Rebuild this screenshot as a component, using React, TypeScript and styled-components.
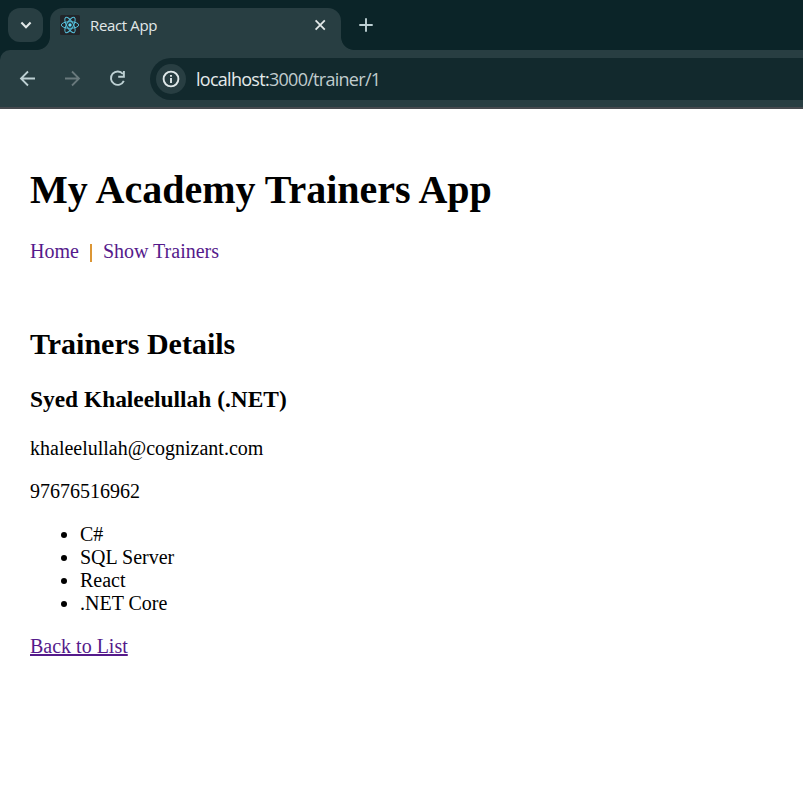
import React from "react";
import styled, { createGlobalStyle } from "styled-components";

const GlobalStyle = createGlobalStyle`
  * { box-sizing: border-box; }
  html, body { margin: 0; padding: 0; background: #fff; overflow: hidden; }
`;

const Browser = styled.div`
  width: 100%;
  height: 791px;
  overflow: hidden;
  background: #0b2428;
`;

const TabStrip = styled.div`
  height: 50px;
  display: flex;
  align-items: flex-start;
  padding: 8px 0 0 8px;
  background: #0b2428;
`;

const TabSearch = styled.div`
  width: 35px;
  height: 34px;
  border-radius: 12px;
  background: #283e42;
  display: flex;
  align-items: center;
  justify-content: center;
`;

const Tab = styled.div`
  position: relative;
  width: 290.5px;
  height: 42px;
  margin-left: 7px;
  padding: 0 13.5px 8px 10px;
  border-radius: 13px 13px 0 0;
  background: #283e42;
  display: flex;
  align-items: center;
`;

const TabFoot = styled.span<{ $side: "left" | "right" }>`
  position: absolute;
  bottom: 0;
  ${(p) => p.$side}: -13px;
  width: 13px;
  height: 13px;
  background: radial-gradient(
    circle at ${(p) => (p.$side === "left" ? "0 0" : "100% 0")},
    transparent 12.5px,
    #283e42 13.3px
  );
`;

const TabTitle = styled.span`
  flex: 1;
  margin-left: 10px;
  font: 15px/20px "Open Sans", "Noto Sans", sans-serif;
  letter-spacing: -0.35px;
  color: #e2e8e8;
  white-space: nowrap;
`;

const NewTab = styled.div`
  width: 34px;
  height: 34px;
  margin-left: 8.5px;
  display: flex;
  align-items: center;
  justify-content: center;
`;

const Toolbar = styled.div`
  height: 59px;
  display: flex;
  align-items: flex-start;
  background: #283e42;
  border-bottom: 2px solid #46494e;
  border-top-left-radius: 10px;
  padding-top: 8px;
`;

const NavButtons = styled.div`
  width: 150px;
  height: 42px;
  padding-left: 18px;
  display: flex;
  align-items: center;
  gap: 25px;
  flex: none;
`;

const AddressBar = styled.div`
  flex: 1;
  height: 42px;
  padding-left: 6px;
  border-radius: 21px 0 0 21px;
  background: #12292d;
  display: flex;
  align-items: center;
`;

const SiteInfo = styled.div`
  width: 30px;
  height: 30px;
  border-radius: 50%;
  background: #283e42;
  display: flex;
  align-items: center;
  justify-content: center;
`;

const Url = styled.span`
  margin-left: 10px;
  font: 18px/24px "Open Sans", "Noto Sans", sans-serif;
  letter-spacing: -0.72px;
  color: #c0cccd;
  white-space: nowrap;
`;

const Host = styled.span`
  color: #e4eaea;
`;

const Page = styled.main`
  height: 682px;
  padding: 58px 30px 0;
  background: #fff;
  color: #000;
  font: 20px/23px "Liberation Serif", "Times New Roman", serif;
`;

const Title = styled.h1`
  margin: 0 0 27px;
  font-size: 40px;
  line-height: 46px;
`;

const Nav = styled.nav`
  display: flex;
  align-items: center;
`;

const NavLink = styled.a`
  color: #551a8b;
`;

const Divider = styled.span`
  width: 2px;
  height: 18px;
  margin: 2px 11px 0;
  background: #dc9635;
`;

const Heading = styled.h2`
  margin: 64px 0 25px;
  font-size: 30px;
  line-height: 34px;
`;

const Name = styled.h3`
  margin: 0 0 24px;
  font-size: 23.4px;
  line-height: 27px;
`;

const Line = styled.p`
  margin: 0 0 20px;
`;

const Skills = styled.ul`
  margin: 0 0 20px;
  padding-left: 50px;
`;

const BackLink = styled.a`
  color: #551a8b;
  text-decoration: underline;
  text-decoration-thickness: 2px;
  text-decoration-skip-ink: none;
  text-underline-offset: 1px;
`;

const ReactLogo = () => (
  <svg width="20" height="20" viewBox="0 0 20 20" fill="none" stroke="#55bdd8" strokeWidth="1">
    <rect width="20" height="20" rx="1.5" fill="#222529" stroke="none" />
    {[0, 60, 120].map((a) => (
      <ellipse key={a} cx="10" cy="10" rx="8.7" ry="3.3" transform={`rotate(${a} 10 10)`} />
    ))}
    <circle cx="10" cy="10" r="1.7" fill="#61dafb" stroke="none" />
  </svg>
);

const Arrow = ({ dim }: { dim?: boolean }) => (
  <svg width="20" height="20" viewBox="0 0 20 20" fill="none" stroke={dim ? "#69797c" : "#bdd0d3"} strokeWidth="1.8">
    {dim ? <path d="M2 9.5h14M9 2.5l7 7-7 7" /> : <path d="M17 9.5H3M10 2.5l-7 7 7 7" />}
  </svg>
);

const skills = ["C#", "SQL Server", "React", ".NET Core"];

export default function App() {
  return (
    <>
      <GlobalStyle />
      <Browser>
        <TabStrip>
          <TabSearch>
            <svg width="12" height="12" viewBox="0 0 12 12" fill="none" stroke="#e2e8e8" strokeWidth="2.1">
              <path d="M1.4 3.6L6 8.2l4.6-4.6" />
            </svg>
          </TabSearch>
          <Tab>
            <TabFoot $side="left" />
            <TabFoot $side="right" />
            <ReactLogo />
            <TabTitle>React App</TabTitle>
            <svg width="14" height="14" viewBox="0 0 14 14" stroke="#e2e8e8" strokeWidth="1.8">
              <path d="M2.6 2.4l9.2 9.2M11.8 2.4l-9.2 9.2" />
            </svg>
          </Tab>
          <NewTab>
            <svg width="14" height="14" viewBox="0 0 14 14" stroke="#bdd0d3" strokeWidth="1.9">
              <path d="M7 .3v13.4M.3 7h13.4" />
            </svg>
          </NewTab>
        </TabStrip>
        <Toolbar>
          <NavButtons>
            <Arrow />
            <Arrow dim />
            <svg width="20" height="20" viewBox="0 0 20 20" fill="none" stroke="#bdd0d3" strokeWidth="1.9">
              <path d="M14.9 5A6.7 6.7 0 1 0 15.8 11.9" />
              <path d="M15.9 2v5.7h-5.7" />
            </svg>
          </NavButtons>
          <AddressBar>
            <SiteInfo>
              <svg width="18" height="18" viewBox="0 0 18 18" fill="none" stroke="#dfe8e9" strokeWidth="1.9">
                <circle cx="9" cy="9" r="7.4" />
                <path d="M9 8v5M9 5v1.8" />
              </svg>
            </SiteInfo>
            <Url>
              <Host>localhost:</Host>3000/trainer/1
            </Url>
          </AddressBar>
        </Toolbar>
        <Page>
          <Title>My Academy Trainers App</Title>
          <Nav>
            <NavLink>Home</NavLink>
            <Divider />
            <NavLink>Show Trainers</NavLink>
          </Nav>
          <Heading>Trainers Details</Heading>
          <Name>Syed Khaleelullah (.NET)</Name>
          <Line>khaleelullah@cognizant.com</Line>
          <Line>97676516962</Line>
          <Skills>
            {skills.map((s) => (
              <li key={s}>{s}</li>
            ))}
          </Skills>
          <BackLink>Back to List</BackLink>
        </Page>
      </Browser>
    </>
  );
}
